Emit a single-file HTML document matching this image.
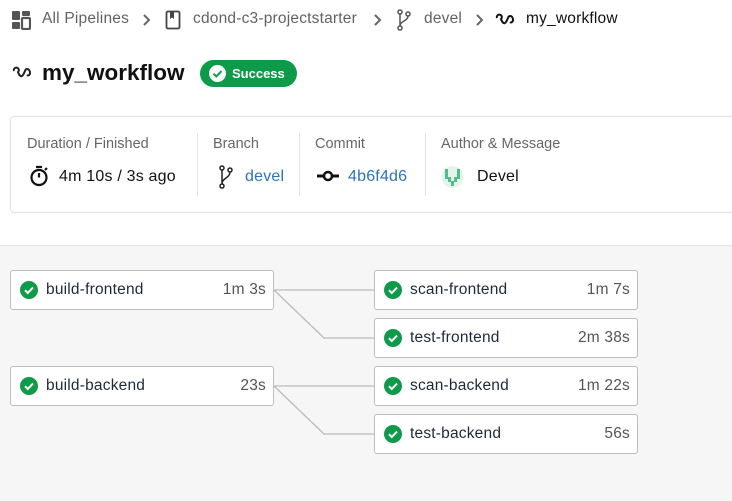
<!DOCTYPE html>
<html><head><meta charset="utf-8"><style>
*{box-sizing:border-box;margin:0;padding:0}
body{width:732px;height:501px;overflow:hidden;background:#fff;font-family:"Liberation Sans",sans-serif;position:relative;color:#222}
.a{position:absolute;white-space:nowrap}
.crumb{font-size:15.5px;color:#5f6368;top:10px;letter-spacing:0.2px}
.lbl{font-size:14.5px;color:#666;top:136px}
.val{font-size:16px;top:168px;color:#111;letter-spacing:0.2px}
.link{color:#2b73b7}
.vline{position:absolute;top:133px;width:1px;height:63px;background:#e4e4e4}
.gray{position:absolute;left:0;top:245px;width:732px;height:256px;background:#f6f6f6;border-top:1px solid #e2e2e2}
.node{position:absolute;width:264px;height:40px;background:#fff;border:1px solid #bdbdbd;border-radius:3px;font-size:15.5px;letter-spacing:0.2px}
.node .n{position:absolute;left:35px;top:10px;color:#1e2a3a}
.node .t{position:absolute;right:7px;top:10px;color:#555}
.node svg{position:absolute;left:9px;top:10px}
</style></head><body>
<svg class="a" style="left:11px;top:10px" width="20" height="20" viewBox="0 0 20 20" fill="#555"><rect x="1" y="1" width="8" height="9" rx="1"/><rect x="11" y="1" width="8" height="5" rx="1"/><rect x="1" y="12" width="8" height="7" rx="1"/><rect x="11" y="8" width="8" height="11" rx="1" fill="none" stroke="#555" stroke-width="2.2"/></svg>
<div class="a crumb" style="left:42px">All Pipelines</div>
<svg class="a" style="left:141px;top:13px" width="10" height="14" viewBox="0 0 10 14" fill="none" stroke="#666" stroke-width="2"><path d="M3 2l5 5-5 5"/></svg>
<svg class="a" style="left:165px;top:10px" width="16" height="20" viewBox="0 0 16 20"><rect x="1.5" y="1.5" width="13" height="17" rx="1.5" fill="none" stroke="#444" stroke-width="1.8"/><path d="M5 2v7l2-1.5L9 9V2z" fill="#444"/></svg>
<div class="a crumb" style="left:193px">cdond-c3-projectstarter</div>
<svg class="a" style="left:372px;top:13px" width="10" height="14" viewBox="0 0 10 14" fill="none" stroke="#666" stroke-width="2"><path d="M3 2l5 5-5 5"/></svg>
<svg class="a" style="left:397px;top:9px" width="14" height="22" viewBox="0 0 14 22" fill="none" stroke="#555" stroke-width="1.5"><circle cx="3" cy="3" r="2"/><circle cx="3" cy="19" r="2"/><circle cx="11" cy="5" r="2"/><path d="M3 5v12M11 7c0 5-8 5-8 10"/></svg>
<div class="a crumb" style="left:424px">devel</div>
<svg class="a" style="left:474px;top:13px" width="10" height="14" viewBox="0 0 10 14" fill="none" stroke="#666" stroke-width="2"><path d="M3 2l5 5-5 5"/></svg>
<svg class="a" style="left:495px;top:13px" width="20" height="14" viewBox="0 0 20 14" fill="none" stroke="#111" stroke-width="2"><path d="M2 5a2.5 2.5 0 1 1 4 1c1 3 3 6 5 3s2-6 4-6 3 2 3 4-2 3-3 2"/></svg>
<div class="a" style="left:526px;top:10px;font-size:15.5px;color:#111;letter-spacing:0.2px">my_workflow</div>

<svg class="a" style="left:11px;top:66px" width="22" height="14" viewBox="0 0 20 14" fill="none" stroke="#222" stroke-width="2"><path d="M2 5a2.5 2.5 0 1 1 4 1c1 3 3 6 5 3s2-6 4-6 3 2 3 4-2 3-3 2"/></svg>
<div class="a" style="left:42px;top:60px;font-size:22.5px;font-weight:bold;color:#111">my_workflow</div>
<div class="a" style="left:200px;top:60px;width:97px;height:27px;border-radius:14px;background:#0d9b4a;color:#fff;font-size:13px;font-weight:bold">
<svg style="position:absolute;left:9px;top:5px" width="17" height="17" viewBox="0 0 17 17"><circle cx="8.5" cy="8.5" r="8.5" fill="#fff"/><path d="M4.5 8.7l2.8 2.8 5.2-5.4" fill="none" stroke="#0d9b4a" stroke-width="2"/></svg>
<span style="position:absolute;left:32px;top:6px">Success</span></div>

<div class="a" style="left:10px;top:116px;width:740px;height:97px;border:1px solid #e2e2e2;border-radius:4px"></div>
<div class="a lbl" style="left:27px">Duration / Finished</div>
<svg class="a" style="left:28px;top:165px" width="22" height="22" viewBox="0 0 22 22" fill="none" stroke="#111" stroke-width="2.2"><circle cx="11" cy="12.5" r="7.5"/><path d="M8 2h6M11 12.5V8M17 5l2-2"/></svg>
<div class="a val" style="left:59px">4m 10s / 3s ago</div>
<div class="vline" style="left:197px"></div>
<div class="a lbl" style="left:213px">Branch</div>
<svg class="a" style="left:219px;top:165px" width="14" height="24" viewBox="0 0 14 24" fill="none" stroke="#222" stroke-width="1.5"><circle cx="3" cy="3" r="2"/><circle cx="3" cy="21" r="2"/><circle cx="11" cy="5" r="2"/><path d="M3 5v14M11 7c0 6-8 6-8 12"/></svg>
<div class="a val link" style="left:245px">devel</div>
<div class="vline" style="left:299px"></div>
<div class="a lbl" style="left:315px">Commit</div>
<svg class="a" style="left:317px;top:170px" width="22" height="12" viewBox="0 0 22 12"><path d="M0 6h22" stroke="#111" stroke-width="3"/><circle cx="11" cy="6" r="4" fill="#fff" stroke="#111" stroke-width="2.5"/></svg>
<div class="a val link" style="left:348px">4b6f4d6</div>
<div class="vline" style="left:425px"></div>
<div class="a lbl" style="left:441px">Author &amp; Message</div>
<svg class="a" style="left:441px;top:165px" width="23" height="24" viewBox="0 0 23 24"><circle cx="11.5" cy="12" r="11" fill="#e4f3ec"/><path d="M4 4h3v8h3v4h3v-4h3V4h3v10h-3v3h-3v4h-3v-4H7v-3H4z" fill="#4fbf8a"/></svg>
<div class="a val" style="left:477px">Devel</div>

<div class="gray"></div>
<svg class="a" style="left:0;top:0" width="732" height="501" fill="none" stroke="#bbb" stroke-width="1.3">
<path d="M274 290H374M274 290l50 48H374M274 386H374M274 386l50 48H374"/>
</svg>

<div class="node" style="left:10px;top:270px"><svg width="18" height="18" viewBox="0 0 18 18"><circle cx="9" cy="9" r="9" fill="#0d9b4a"/><path d="M5 9.2l2.8 2.8 5.2-5.4" fill="none" stroke="#fff" stroke-width="2"/></svg><span class="n">build-frontend</span><span class="t">1m 3s</span></div>
<div class="node" style="left:10px;top:366px"><svg width="18" height="18" viewBox="0 0 18 18"><circle cx="9" cy="9" r="9" fill="#0d9b4a"/><path d="M5 9.2l2.8 2.8 5.2-5.4" fill="none" stroke="#fff" stroke-width="2"/></svg><span class="n">build-backend</span><span class="t">23s</span></div>
<div class="node" style="left:374px;top:270px"><svg width="18" height="18" viewBox="0 0 18 18"><circle cx="9" cy="9" r="9" fill="#0d9b4a"/><path d="M5 9.2l2.8 2.8 5.2-5.4" fill="none" stroke="#fff" stroke-width="2"/></svg><span class="n">scan-frontend</span><span class="t">1m 7s</span></div>
<div class="node" style="left:374px;top:318px"><svg width="18" height="18" viewBox="0 0 18 18"><circle cx="9" cy="9" r="9" fill="#0d9b4a"/><path d="M5 9.2l2.8 2.8 5.2-5.4" fill="none" stroke="#fff" stroke-width="2"/></svg><span class="n">test-frontend</span><span class="t">2m 38s</span></div>
<div class="node" style="left:374px;top:366px"><svg width="18" height="18" viewBox="0 0 18 18"><circle cx="9" cy="9" r="9" fill="#0d9b4a"/><path d="M5 9.2l2.8 2.8 5.2-5.4" fill="none" stroke="#fff" stroke-width="2"/></svg><span class="n">scan-backend</span><span class="t">1m 22s</span></div>
<div class="node" style="left:374px;top:414px"><svg width="18" height="18" viewBox="0 0 18 18"><circle cx="9" cy="9" r="9" fill="#0d9b4a"/><path d="M5 9.2l2.8 2.8 5.2-5.4" fill="none" stroke="#fff" stroke-width="2"/></svg><span class="n">test-backend</span><span class="t">56s</span></div>
</body></html>
